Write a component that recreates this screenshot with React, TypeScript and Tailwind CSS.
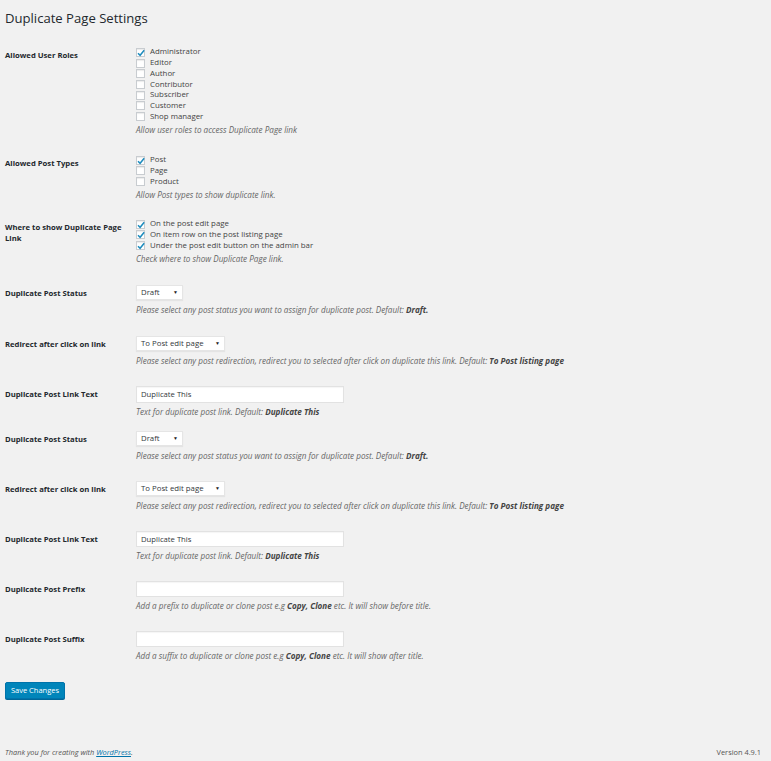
import React from 'react';

const font = { fontFamily: '"Open Sans", "Noto Sans", sans-serif' };

function Check({ label, checked }: { label: string; checked?: boolean }) {
  return (
    <label className="flex items-center h-[10.7px]">
      <span className="relative w-[9px] h-[9px] bg-white border border-[#c8ccd0] shadow-[inset_0_1px_1px_rgba(0,0,0,0.08)] shrink-0">
        {checked && (
          <svg viewBox="0 0 10 10" className="absolute -left-[1px] -top-[1px] w-[10px] h-[10px]">
            <path d="M2 5.2 L4.1 7.3 L8.2 2.2" fill="none" stroke="#1e8cbe" strokeWidth="1.5" />
          </svg>
        )}
      </span>
      <span className="ml-[5px] text-[7.85px] text-[#444]">{label}</span>
    </label>
  );
}

function Select({ value, width }: { value: string; width: string }) {
  return (
    <div className={`relative h-[15px] ${width} bg-white border border-[#e5e5e5] shadow-[0_1px_1px_rgba(0,0,0,0.05)] flex items-center pl-[4px] text-[7.8px] text-[#32373c]`}>
      {value}
      <span className="absolute right-[4px] top-[3px] text-[5px] text-[#222]">▼</span>
    </div>
  );
}

function TextInput({ value, h = 'h-[17px]' }: { value?: string; h?: string }) {
  return (
    <input
      readOnly
      defaultValue={value}
      className={`block w-[208px] ${h} bg-white border border-[#e2e2e2] shadow-[inset_0_1px_1px_rgba(0,0,0,0.04)] px-[4px] text-[7.7px] text-[#32373c] outline-none`}
      style={font}
    />
  );
}

function Desc({ children, mt = 'mt-[2px]' }: { children: React.ReactNode; mt?: string }) {
  return <p className={`${mt} leading-[11px] text-[8.15px] italic text-[#666]`}>{children}</p>;
}

function Row({ label, pt, children }: { label: React.ReactNode; pt: string; children: React.ReactNode }) {
  return (
    <div className={`flex ${pt}`}>
      <div className="w-[131px] shrink-0 pr-[9px] pt-[3px] leading-[11.5px] text-[7.7px] font-bold text-[#23282d]">
        {label}
      </div>
      <div className="flex-1">{children}</div>
    </div>
  );
}

const B = ({ children }: { children: React.ReactNode }) => (
  <b className="font-bold text-[#444]">{children}</b>
);

export default function App() {
  return (
    <div className="min-h-[761px] bg-[#f1f1f1] flex flex-col text-[#23282d]" style={font}>
      <div className="pl-[5px] pr-[10px] flex-1">
        <h1 className="pt-[8px] text-[13.1px] leading-[20px] font-normal text-[#23282d]">
          Duplicate Page Settings
        </h1>

        <Row label="Allowed User Roles" pt="pt-[19px]">
          <Check label="Administrator" checked />
          <Check label="Editor" />
          <Check label="Author" />
          <Check label="Contributor" />
          <Check label="Subscriber" />
          <Check label="Customer" />
          <Check label="Shop manager" />
          <Desc>Allow user roles to access Duplicate Page link</Desc>
        </Row>

        <Row label="Allowed Post Types" pt="pt-[20px]">
          <Check label="Post" checked />
          <Check label="Page" />
          <Check label="Product" />
          <Desc>Allow Post types to show duplicate link.</Desc>
        </Row>

        <Row label="Where to show Duplicate Page Link" pt="pt-[19px]">
          <Check label="On the post edit page" checked />
          <Check label="On item row on the post listing page" checked />
          <Check label="Under the post edit button on the admin bar" checked />
          <Desc>Check where to show Duplicate Page link.</Desc>
        </Row>

        <Row label="Duplicate Post Status" pt="pt-[21px]">
          <Select value="Draft" width="w-[47px]" />
          <Desc mt="mt-[4px]">
            Please select any post status you want to assign for duplicate post. Default: <B>Draft.</B>
          </Desc>
        </Row>

        <Row label="Redirect after click on link" pt="pt-[21px]">
          <Select value="To Post edit page" width="w-[89px]" />
          <Desc mt="mt-[4px]">
            Please select any post redirection, redirect you to selected after click on duplicate this link. Default:{' '}
            <B>To Post listing page</B>
          </Desc>
        </Row>

        <Row label="Duplicate Post Link Text" pt="pt-[20px]">
          <TextInput value="Duplicate This" />
          <Desc mt="mt-[3px]">
            Text for duplicate post link. Default: <B>Duplicate This</B>
          </Desc>
        </Row>

        <Row label="Duplicate Post Status" pt="pt-[14px]">
          <Select value="Draft" width="w-[47px]" />
          <Desc mt="mt-[4px]">
            Please select any post status you want to assign for duplicate post. Default: <B>Draft.</B>
          </Desc>
        </Row>

        <Row label="Redirect after click on link" pt="pt-[20px]">
          <Select value="To Post edit page" width="w-[89px]" />
          <Desc mt="mt-[4px]">
            Please select any post redirection, redirect you to selected after click on duplicate this link. Default:{' '}
            <B>To Post listing page</B>
          </Desc>
        </Row>

        <Row label="Duplicate Post Link Text" pt="pt-[20px]">
          <TextInput value="Duplicate This" h="h-[16px]" />
          <Desc mt="mt-[3px]">
            Text for duplicate post link. Default: <B>Duplicate This</B>
          </Desc>
        </Row>

        <Row label="Duplicate Post Prefix" pt="pt-[20px]">
          <TextInput h="h-[16px]" />
          <Desc mt="mt-[3px]">
            Add a prefix to duplicate or clone post e.g <B>Copy, Clone</B> etc. It will show before title.
          </Desc>
        </Row>

        <Row label="Duplicate Post Suffix" pt="pt-[20px]">
          <TextInput h="h-[16px]" />
          <Desc mt="mt-[3px]">
            Add a suffix to duplicate or clone post e.g <B>Copy, Clone</B> etc. It will show after title.
          </Desc>
        </Row>

        <div className="flex pt-[21px]">
          <button className="h-[17px] w-[60px] rounded-[2px] bg-[#0085ba] border border-[#0073aa] shadow-[0_1px_0_#006799] text-white text-[7.5px] leading-none">
            Save Changes
          </button>
        </div>
      </div>

      <div className="flex justify-between items-center pl-[5px] pr-[10px] pb-[3px] text-[7.4px] text-[#555]">
        <span className="italic">
          Thank you for creating with <a className="text-[#0073aa] underline">WordPress</a>.
        </span>
        <span>Version 4.9.1</span>
      </div>
    </div>
  );
}
